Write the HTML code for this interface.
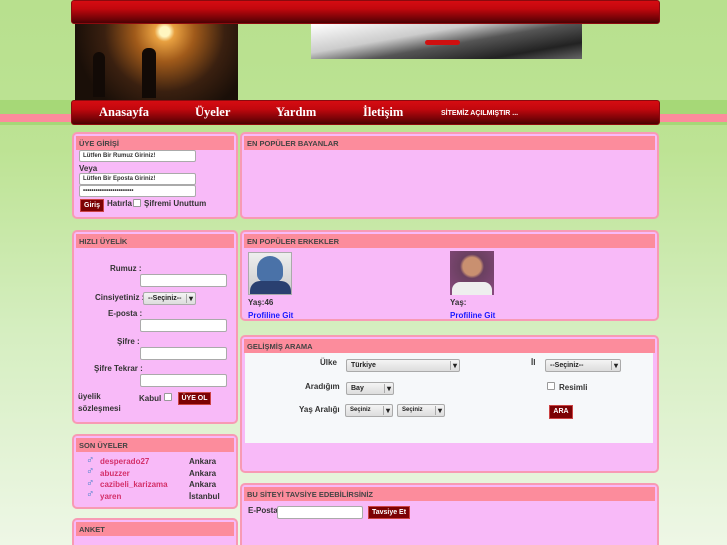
<!DOCTYPE html>
<html><head><meta charset="utf-8"><style>
*{margin:0;padding:0;box-sizing:border-box}
html,body{width:727px;height:545px;overflow:hidden}
body{position:relative;font-family:"Liberation Sans",sans-serif;font-size:8px;font-weight:bold;color:#333;
background:linear-gradient(#b8e08e 0px,#bde394 150px,#d5eec0 330px,#eef7e6 545px)}
.abs{position:absolute}
.band{left:0;width:727px;top:100px;height:25px;background:#a6d877}
.stripe{left:0;width:727px;top:114px;height:8px;background:#fc8c9c}
.bar{background:linear-gradient(#d60c12 0%,#c2080e 35%,#6a0206 85%,#4a0104 100%);border-radius:3px;border:1px solid #8a0a0e}
.box{background:#f8baf8;border:2px solid #f89ab4;border-radius:5px}
.hd{position:absolute;left:2px;right:2px;top:2px;height:14px;background:#fc8c9c;font-size:7.5px;color:#444;padding:3px 0 0 3px;white-space:nowrap}
.in{position:absolute;background:#fff;border:1px solid #aaa;border-radius:2px;font-size:6px;font-weight:bold;color:#333;padding:2px 3px;height:12px;white-space:nowrap;overflow:hidden}
.btn{position:absolute;background:#7c0204;color:#fff;font-size:7px;border:1px solid #c44;text-align:center;padding-top:2px}
.sel{position:absolute;background:linear-gradient(#f4f4f4,#ddd);border:1px solid #aaa;border-radius:2px;font-size:7px;color:#222;padding:2px 4px;height:13px}
.sel:after{content:"▾";position:absolute;right:2px;top:1px;font-size:8px;border-left:1px solid #aaa;padding-left:2px}
.cb{position:absolute;width:8px;height:8px;background:#fff;border:1px solid #999;border-radius:1px}
.nav{color:#fff;font-family:"Liberation Serif",serif;font-size:12.5px;font-weight:bold;top:105px}
.lk{color:#1a1aff}
.red{color:#d4306a}
.sym{position:absolute;color:#3a7cc8;font-size:11px;line-height:11px}
</style></head><body>
<div class="abs band"></div><div class="abs stripe"></div>
<div class="abs bar" style="left:71px;top:0;width:589px;height:24px"></div>
<div class="abs" style="left:75px;top:24px;width:163px;height:76px;background:radial-gradient(circle at 55% 10%,#fff6c0 0 5px,#e8a040 10px,#a05a1a 30px,#3a2010 60px,#1a0f08 90px)"></div>
<div class="abs" style="left:93px;top:52px;width:12px;height:45px;background:#120a06;border-radius:6px 6px 0 0"></div>
<div class="abs" style="left:142px;top:48px;width:14px;height:50px;background:#120a06;border-radius:6px 6px 0 0"></div>
<div class="abs" style="left:311px;top:24px;width:271px;height:35px;background:linear-gradient(170deg,#fff 0%,#ccc 35%,#555 55%,#222 80%,#666 100%)"></div>
<div class="abs" style="left:425px;top:40px;width:35px;height:5px;background:#d01010;border-radius:3px"></div>
<div class="abs bar" style="left:71px;top:100px;width:589px;height:25px"></div>
<div class="abs nav" style="left:99px">Anasayfa</div>
<div class="abs nav" style="left:195px">Üyeler</div>
<div class="abs nav" style="left:276px">Yardım</div>
<div class="abs nav" style="left:363px">İletişim</div>
<div class="abs" style="left:441px;top:110px;color:#fff;font-size:7px">SİTEMİZ AÇILMIŞTIR ...</div>

<!-- left -->
<div class="abs box" style="left:72px;top:132px;width:166px;height:87px"><div class="hd">ÜYE GİRİŞİ</div></div>
<div class="in" style="left:79px;top:150px;width:117px">Lütfen Bir Rumuz Giriniz!</div>
<div class="abs" style="left:79px;top:164px">Veya</div>
<div class="in" style="left:79px;top:173px;width:117px">Lütfen Bir Eposta Giriniz!</div>
<div class="in" style="left:79px;top:185px;width:117px">••••••••••••••••••••••••</div>
<div class="btn" style="left:80px;top:199px;width:24px;height:13px">Giriş</div>
<div class="abs" style="left:107px;top:199px">Hatırla</div><div class="cb" style="left:133px;top:199px"></div>
<div class="abs" style="left:144px;top:199px">Şifremi Unuttum</div>

<div class="abs box" style="left:72px;top:230px;width:166px;height:194px"><div class="hd">HIZLI ÜYELİK</div></div>
<div class="abs" style="left:110px;top:264px">Rumuz :</div>
<div class="in" style="left:140px;top:274px;width:87px;height:13px"></div>
<div class="abs" style="left:95px;top:293px">Cinsiyetiniz :</div>
<div class="sel" style="left:143px;top:292px;width:53px">--Seçiniz--</div>
<div class="abs" style="left:108px;top:309px">E-posta :</div>
<div class="in" style="left:140px;top:319px;width:87px;height:13px"></div>
<div class="abs" style="left:117px;top:337px">Şifre :</div>
<div class="in" style="left:140px;top:347px;width:87px;height:13px"></div>
<div class="abs" style="left:94px;top:364px">Şifre Tekrar :</div>
<div class="in" style="left:140px;top:374px;width:87px;height:13px"></div>
<div class="abs" style="left:78px;top:391px;line-height:12px">üyelik<br>sözleşmesi</div>
<div class="abs" style="left:139px;top:394px">Kabul</div><div class="cb" style="left:164px;top:393px"></div>
<div class="btn" style="left:178px;top:392px;width:33px;height:13px">ÜYE OL</div>

<div class="abs box" style="left:72px;top:434px;width:166px;height:75px"><div class="hd">SON ÜYELER</div></div>
<div class="sym" style="left:86px;top:455px">♂</div>
<div class="sym" style="left:86px;top:466px">♂</div>
<div class="sym" style="left:86px;top:478px">♂</div>
<div class="sym" style="left:86px;top:489px">♂</div>
<div class="abs red" style="left:100px;top:456px;line-height:11.6px">desperado27<br>abuzzer<br>cazibeli_karizama<br>yaren</div>
<div class="abs" style="left:189px;top:456px;line-height:11.6px">Ankara<br>Ankara<br>Ankara<br>İstanbul</div>

<div class="abs box" style="left:72px;top:518px;width:166px;height:40px"><div class="hd">ANKET</div></div>

<!-- right -->
<div class="abs box" style="left:240px;top:132px;width:419px;height:87px"><div class="hd">EN POPÜLER BAYANLAR</div></div>
<div class="abs box" style="left:240px;top:230px;width:419px;height:91px"><div class="hd">EN POPÜLER ERKEKLER</div></div>
<div class="abs" style="left:248px;top:252px;width:44px;height:43px;background:linear-gradient(#eee,#ccc);border:1px solid #aaa;overflow:hidden">
<div class="abs" style="left:8px;top:3px;width:26px;height:26px;background:#4a72a8;border-radius:50% 50% 30% 30%"></div>
<div class="abs" style="left:1px;top:28px;width:41px;height:14px;background:#2a4070;border-radius:10px 10px 0 0"></div></div>
<div class="abs" style="left:450px;top:251px;width:44px;height:44px;background:radial-gradient(circle at 50% 35%,#c99070 0 9px,#6a4060 12px,#8a4a80 100%);overflow:hidden">
<div class="abs" style="left:2px;top:31px;width:40px;height:13px;background:#eee;border-radius:8px 8px 0 0"></div></div>
<div class="abs" style="left:248px;top:296px;line-height:13px">Yaş:46<br><span class="lk">Profiline Git</span></div>
<div class="abs" style="left:450px;top:296px;line-height:13px">Yaş:<br><span class="lk">Profiline Git</span></div>

<div class="abs box" style="left:240px;top:335px;width:419px;height:138px"><div class="hd">GELİŞMİŞ ARAMA</div></div>
<div class="abs" style="left:245px;top:353px;width:408px;height:90px;background:#f6f8fa"></div>
<div class="abs" style="left:320px;top:358px">Ülke</div>
<div class="sel" style="left:346px;top:359px;width:114px">Türkiye</div>
<div class="abs" style="left:531px;top:358px">İl</div>
<div class="sel" style="left:545px;top:359px;width:76px">--Seçiniz--</div>
<div class="abs" style="left:305px;top:382px">Aradığım</div>
<div class="sel" style="left:346px;top:382px;width:48px">Bay</div>
<div class="cb" style="left:547px;top:382px"></div><div class="abs" style="left:559px;top:383px">Resimli</div>
<div class="abs" style="left:299px;top:405px">Yaş Aralığı</div>
<div class="sel" style="left:345px;top:404px;width:48px;font-size:6px">Seçiniz</div>
<div class="sel" style="left:397px;top:404px;width:48px;font-size:6px">Seçiniz</div>
<div class="btn" style="left:549px;top:405px;width:24px;height:14px">ARA</div>

<div class="abs box" style="left:240px;top:483px;width:419px;height:70px"><div class="hd">BU SİTEYİ TAVSİYE EDEBİLİRSİNİZ</div></div>
<div class="abs" style="left:248px;top:506px">E-Posta</div>
<div class="in" style="left:277px;top:506px;width:86px;height:13px"></div>
<div class="btn" style="left:368px;top:506px;width:42px;height:13px">Tavsiye Et</div>
</body></html>
